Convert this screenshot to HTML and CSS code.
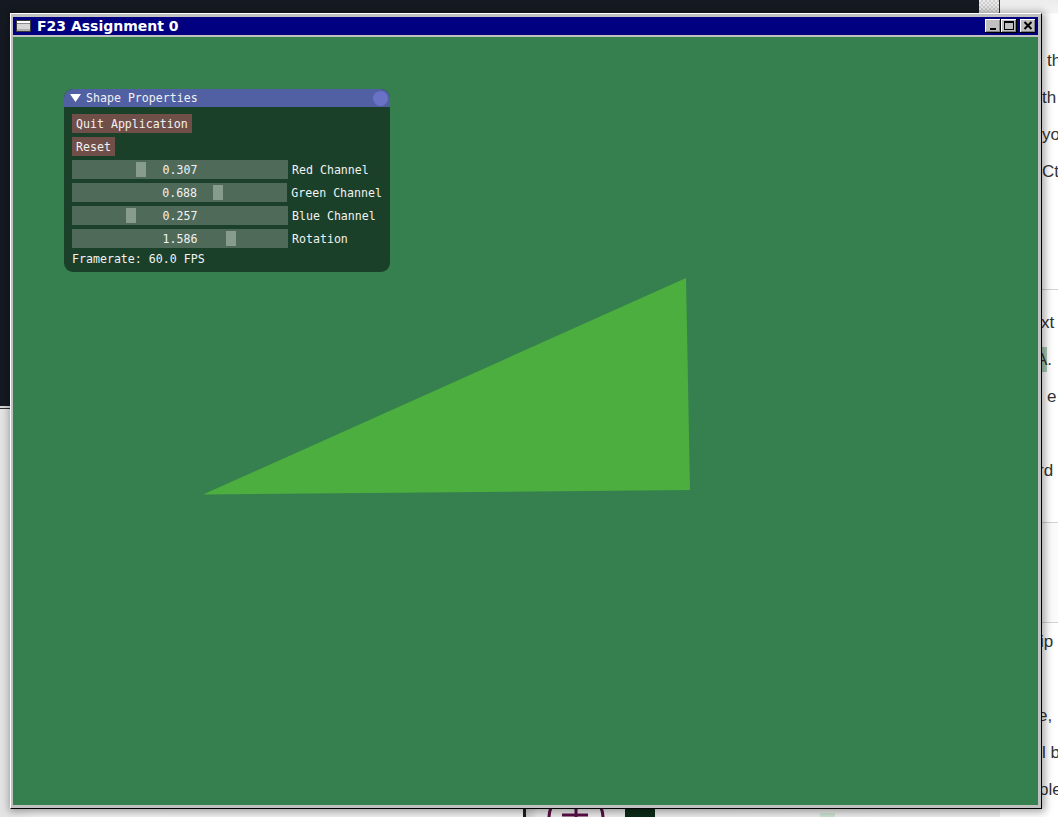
FILE: index.html
```html
<!DOCTYPE html>
<html>
<head>
<meta charset="utf-8">
<title>F23 Assignment 0</title>
<link rel="stylesheet" href="styles.css">
</head>
<body>
<div class="desktop">
  <div class="checker"></div>

  <div class="browser">
    <div class="page">
      <div class="block b1">
        <div class="ln ind">th</div>
        <div class="ln">th</div>
        <div class="ln">yo</div>
        <div class="ln">Ct</div>
      </div>
      <div class="sep s1"></div>
      <div class="block b2">
        <div class="ln cut1">xt</div>
        <div class="ln cut5"><span class="hl">A</span>.</div>
        <div class="ln ind">e</div>
        <div class="ln"></div>
        <div class="ln cut4">rd</div>
      </div>
      <div class="sep s2"></div>
      <div class="band"></div>
      <div class="sep"></div>
      <div class="block b3">
        <div class="ln cut2">ip</div>
        <div class="ln"></div>
        <div class="ln cut4">e,</div>
        <div class="ln">l b</div>
        <div class="ln cut3">ple</div>
      </div>
    </div>
  </div>

  <div class="lowwin"></div>
  <div class="midwin">
    <svg class="midart" width="474" height="217" viewBox="0 0 474 217">
      <circle cx="50" cy="218" r="27" fill="none" stroke="#5b0f48" stroke-width="3"/>
      <line x1="50" y1="206" x2="50" y2="230" stroke="#5b0f48" stroke-width="3"/>
      <line x1="36" y1="215" x2="62" y2="215" stroke="#5b0f48" stroke-width="3"/>
      <rect x="99" y="209" width="30" height="10" fill="#0c2b17"/>
      <rect x="294" y="213" width="15" height="6" fill="#cde5d3"/>
    </svg>
  </div>

  <div class="xwin">
    <div class="xtitle">
      <svg class="xicon" width="15" height="12" viewBox="0 0 15 12">
        <rect x="0.5" y="0.5" width="14" height="11" fill="#d6d6d6" stroke="#3a3a3a"/>
        <rect x="1" y="1" width="13" height="2" fill="#ffffff"/>
        <rect x="1" y="3" width="13" height="1" fill="#8a8a8a"/>
        <rect x="1" y="9" width="13" height="2" fill="#b0b0b0"/>
      </svg>
      <span class="xtitle-text">F23 Assignment 0</span>
      <div class="xbtns">
        <div class="xbtn">
          <svg width="16" height="14" viewBox="0 0 16 14"><rect x="5" y="9" width="6" height="2" fill="#000"/></svg>
        </div>
        <div class="xbtn">
          <svg width="16" height="14" viewBox="0 0 16 14"><rect x="3.5" y="2.5" width="9" height="8" fill="none" stroke="#000"/><rect x="3" y="2" width="10" height="2" fill="#000"/></svg>
        </div>
        <div class="xbtn xclose">
          <svg width="16" height="14" viewBox="0 0 16 14"><path d="M4.5 3 L11.5 10 M11.5 3 L4.5 10" stroke="#000" stroke-width="2"/></svg>
        </div>
      </div>
    </div>

    <div class="canvas">
      <svg class="scene" width="1025" height="768" viewBox="0 0 1025 768">
        <polygon points="190,457.5 673,241 677,453" fill="#4cae3f"/>
      </svg>

      <div class="imgui">
        <div class="ig-title">
          <svg class="ig-arrow" width="11" height="8" viewBox="0 0 11 8"><polygon points="0,0 11,0 5.5,8" fill="#ffffff"/></svg>
          <span class="ig-title-text">Shape Properties</span>
          <span class="ig-close"></span>
        </div>
        <div class="ig-body">
          <div class="ig-row"><span class="ig-btn">Quit Application</span></div>
          <div class="ig-row"><span class="ig-btn">Reset</span></div>
          <div class="ig-row">
            <div class="ig-slider"><span class="ig-grab" style="left:64px"></span><span class="ig-val">0.307</span></div>
            <span class="ig-label">Red Channel</span>
          </div>
          <div class="ig-row">
            <div class="ig-slider"><span class="ig-grab" style="left:141px"></span><span class="ig-val">0.688</span></div>
            <span class="ig-label">Green Channel</span>
          </div>
          <div class="ig-row">
            <div class="ig-slider"><span class="ig-grab" style="left:54px"></span><span class="ig-val">0.257</span></div>
            <span class="ig-label">Blue Channel</span>
          </div>
          <div class="ig-row">
            <div class="ig-slider"><span class="ig-grab" style="left:154px"></span><span class="ig-val">1.586</span></div>
            <span class="ig-label">Rotation</span>
          </div>
          <div class="ig-text">Framerate: 60.0 FPS</div>
        </div>
      </div>
    </div>
  </div>
</div>
</body>
</html>
```

FILE: styles.css
```css
* { box-sizing: border-box; }
html, body { margin: 0; padding: 0; }
body {
  width: 1058px;
  height: 817px;
  overflow: hidden;
  background: #151a22;
  font-family: "DejaVu Sans", sans-serif;
}
.desktop {
  position: relative;
  width: 1058px;
  height: 817px;
  overflow: hidden;
  background: #151a22;
}

/* ---------- background windows ---------- */
.checker {
  position: absolute;
  left: 979px;
  top: 0;
  width: 20px;
  height: 14px;
  background: repeating-conic-gradient(#cfcfcf 0 25%, #ebebeb 0 50%) 0 0 / 4px 4px;
}
.browser {
  position: absolute;
  left: 999px;
  top: 0;
  right: 0;
  bottom: 0;
  background: linear-gradient(#ececec 0, #f4f4f4 13px, #ffffff 14px);
  border-left: 1px solid #2a2a2a;
}
.page {
  padding: 42px 0 0 42px;
  font-family: "Liberation Sans", Arial, sans-serif;
  font-size: 17px;
  color: #333333;
}
.block { display: flex; flex-direction: column; }
.ln { height: 37px; line-height: 37px; white-space: nowrap; }
.ind { padding-left: 5px; }
.cut1 { margin-left: -1px; }
.cut2 { margin-left: -2px; }
.cut3 { margin-left: -3px; }
.cut4 { margin-left: -4px; }
.cut5 { margin-left: -6px; }
.hl { background: #a9cbb3; padding: 3px 0; }
.sep { height: 1px; background: #d2d2d2; margin-left: -42px; }
.s1 { margin-top: 99px; }
.b2 { padding-top: 14px; }
.s2 { margin-top: 33px; }
.band { height: 99px; background: #fbfbfb; margin-left: -42px; }

.lowwin {
  position: absolute;
  left: 0;
  top: 406px;
  width: 526px;
  bottom: 0;
  background: linear-gradient(90deg, #e4e4e4 0, #f4f4f4 40px, #f2f2f2);
  border-top: 2px solid #d6d6d6;
  border-right: 3px solid #1e1e1e;
  box-shadow: inset 0 1px 0 #2b2b2b;
}
.midwin {
  position: absolute;
  left: 526px;
  top: 600px;
  width: 474px;
  bottom: 0;
  background: linear-gradient(90deg, #cfcfcf 0, #ececec 12px, #efefef);
}
.midart { display: block; }

/* ---------- main X11 window ---------- */
.xwin {
  position: absolute;
  left: 10px;
  top: 13px;
  width: 1032px;
  height: 796px;
  display: flex;
  flex-direction: column;
  gap: 2px;
  background: #c0c0c0;
  border-top: 1px solid #ffffff;
  border-left: 1px solid #ffffff;
  border-right: 1px solid #000000;
  border-bottom: 1px solid #000000;
  padding: 3px 3px 3px 2px;
  box-shadow: 1px 1px 8px 2px rgba(0, 0, 0, 0.35);
}
.xtitle {
  height: 18px;
  flex: none;
  background: #000080;
  display: flex;
  align-items: center;
  padding: 0 2px 0 3px;
}
.xicon { display: block; flex: none; }
.xtitle-text {
  margin-left: 6px;
  color: #ffffff;
  font-family: "DejaVu Sans", sans-serif;
  font-weight: bold;
  font-size: 14px;
  line-height: 18px;
  white-space: nowrap;
}
.xbtns {
  margin-left: auto;
  display: flex;
  align-items: center;
}
.xbtn {
  width: 16px;
  height: 14px;
  background: #c0c0c0;
  box-shadow: inset -1px -1px 0 #000000, inset 1px 1px 0 #ffffff, inset -2px -2px 0 #808080;
}
.xbtn svg { display: block; }
.xclose { margin-left: 3px; }

.canvas {
  position: relative;
  width: 1025px;
  height: 768px;
  flex: none;
  background: #35804e;
  overflow: hidden;
}
.scene {
  position: absolute;
  left: 0;
  top: 0;
  display: block;
}

/* ---------- ImGui panel ---------- */
.imgui {
  position: absolute;
  left: 51px;
  top: 52px;
  width: 326px;
  background: #1b4029;
  border-radius: 9px;
  overflow: hidden;
  font-family: "DejaVu Sans Mono", "Liberation Mono", monospace;
  font-size: 11.6px;
  color: #f2f2f2;
}
.ig-title {
  height: 18px;
  background: #5060a2;
  display: flex;
  align-items: center;
  padding: 0 2px 0 6px;
}
.ig-arrow { display: block; flex: none; }
.ig-title-text {
  margin-left: 5px;
  line-height: 18px;
  white-space: nowrap;
}
.ig-close {
  margin-left: auto;
  width: 15px;
  height: 15px;
  border-radius: 50%;
  background: #6a72c6;
}
.ig-body {
  padding: 7px 8px 6px 8px;
  display: flex;
  flex-direction: column;
  gap: 4px;
}
.ig-row {
  display: flex;
  align-items: center;
  height: 19px;
}
.ig-btn {
  height: 19px;
  padding: 1px 4px 0 4px;
  line-height: 18px;
  background: #704f48;
  white-space: nowrap;
}
.ig-slider {
  position: relative;
  width: 216px;
  height: 19px;
  background: #506a59;
  display: flex;
  align-items: center;
  justify-content: center;
}
.ig-grab {
  position: absolute;
  top: 2px;
  width: 10px;
  height: 15px;
  background: #889c8e;
}
.ig-val {
  position: relative;
  height: 19px;
  padding-top: 1px;
  line-height: 18px;
  white-space: nowrap;
}
.ig-label {
  margin-left: 4px;
  height: 19px;
  padding-top: 1px;
  line-height: 18px;
  white-space: nowrap;
}
.ig-text {
  height: 14px;
  padding-top: 1px;
  line-height: 13px;
  white-space: nowrap;
}
```
